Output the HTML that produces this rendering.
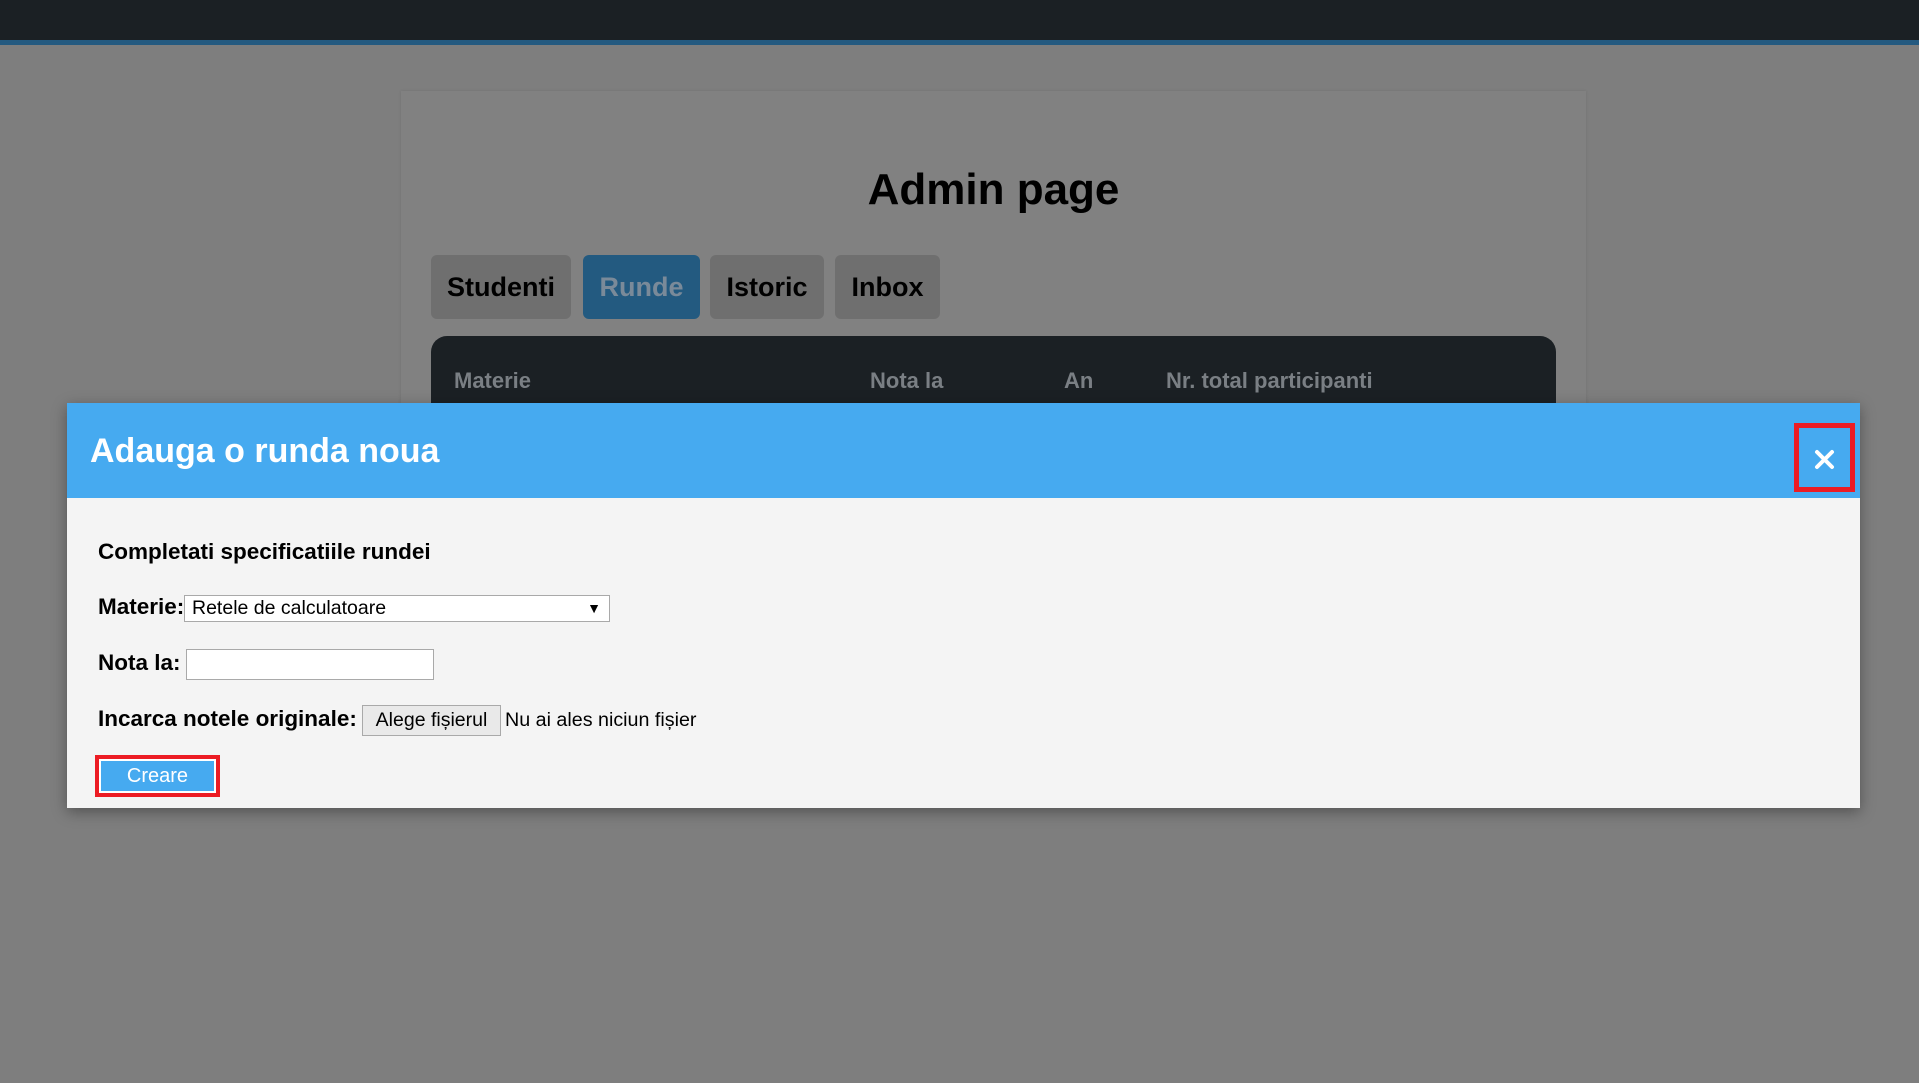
<!DOCTYPE html>
<html><head><meta charset="utf-8"><style>
*{box-sizing:border-box;margin:0;padding:0}
body{width:1919px;height:1083px;background:#7e7e7e;font-family:"Liberation Sans",Arial,sans-serif;position:relative;overflow:hidden}
.top{position:absolute;left:0;top:0;width:1919px;height:40px;background:#1b2024}
.line{position:absolute;left:0;top:40px;width:1919px;height:5px;background:#245a80}
.cont{position:absolute;left:401px;top:91px;width:1185px;height:700px;background:#818181;box-shadow:0 0 3px rgba(0,0,0,.1)}
h1{position:absolute;left:401px;width:1185px;top:165px;text-align:center;font-size:44px;font-weight:bold;color:#000}
.tab{position:absolute;top:255px;height:64px;background:#6f6f6f;border-radius:6px;font-size:27px;font-weight:bold;color:#000;text-align:center;line-height:64px}
.tbl{position:absolute;left:431px;top:336px;width:1125px;height:120px;background:#1b2024;border-radius:16px 16px 0 0}
.th{position:absolute;top:368px;font-size:22px;font-weight:bold;color:#7a7f84}
.modal{position:absolute;left:67px;top:403px;width:1793px;height:405px;background:#f4f4f4;box-shadow:0 4px 14px rgba(0,0,0,.35)}
.mh{position:absolute;left:0;top:0;width:1793px;height:95px;background:#46aaf0}
.mt{position:absolute;left:23px;top:29px;font-size:34px;font-weight:bold;color:#fff}
.close{position:absolute;left:1727px;top:20px;width:61px;height:69px;border:5px solid #ec1c24}
.lbl{position:absolute;font-size:22.5px;font-weight:bold;color:#000}
.box{position:absolute;background:#fff;border:1px solid #a9a9a9}
</style></head><body>
<div class="top"></div><div class="line"></div>
<div class="cont"></div>
<h1>Admin page</h1>
<div class="tab" style="left:431px;width:140px">Studenti</div>
<div class="tab" style="left:583px;width:117px;background:#235a80;color:#7a8a99">Runde</div>
<div class="tab" style="left:710px;width:114px">Istoric</div>
<div class="tab" style="left:835px;width:105px">Inbox</div>
<div class="tbl"></div>
<div class="th" style="left:454px">Materie</div>
<div class="th" style="left:870px">Nota la</div>
<div class="th" style="left:1064px">An</div>
<div class="th" style="left:1166px">Nr. total participanti</div>
<div class="modal">
 <div class="mh"><div class="mt">Adauga o runda noua</div>
  <div class="close"><svg width="51" height="59" viewBox="0 0 51 59"><path d="M18 24 L33 39 M33 24 L18 39" stroke="#fff" stroke-width="4" stroke-linecap="round"/></svg></div>
 </div>
 <div class="lbl" style="left:31px;top:136px">Completati specificatiile rundei</div>
 <div class="lbl" style="left:31px;top:191px">Materie:</div>
 <div class="box" style="left:117px;top:192px;width:426px;height:27px;font-size:19.5px;padding:2px 7px;line-height:21px">Retele de calculatoare<span style="position:absolute;right:8px;top:2px;font-size:14px">▼</span></div>
 <div class="lbl" style="left:31px;top:247px">Nota la:</div>
 <div class="box" style="left:119px;top:246px;width:248px;height:31px"></div>
 <div class="lbl" style="left:31px;top:303px">Incarca notele originale:</div>
 <div class="box" style="left:295px;top:302px;width:139px;height:31px;background:#e9e9e9;font-size:19.5px;text-align:center;line-height:29px">Alege fișierul</div>
 <div style="position:absolute;left:438px;top:306px;font-size:19.7px;color:#000">Nu ai ales niciun fișier</div>
 <div style="position:absolute;left:28px;top:352px;width:125px;height:42px;border:4px solid #ec1c24;background:#46aaf0;color:#fff;font-size:20px;text-align:center;line-height:34px;box-shadow:inset 0 0 0 2px #fff">Creare</div>
</div>
</body></html>
